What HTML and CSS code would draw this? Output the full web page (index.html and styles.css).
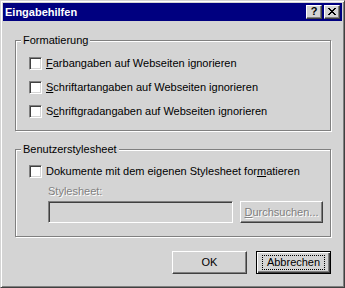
FILE: index.html
```html
<!DOCTYPE html>
<html lang="de">
<head>
<meta charset="utf-8">
<title>Eingabehilfen</title>
<link rel="stylesheet" href="styles.css">
</head>
<body>
<div class="window">
  <div class="titlebar">
    <span class="title">Eingabehilfen</span>
    <div class="caption-buttons">
      <span class="cap-btn help">?</span>
      <span class="cap-btn close">
        <svg width="8" height="7" viewBox="0 0 8 7" shape-rendering="crispEdges">
          <path d="M0 0h2v1h-2zM6 0h2v1h-2zM1 1h2v1h-2zM5 1h2v1h-2zM2 2h4v1h-4zM3 3h2v1h-2zM2 4h4v1h-4zM1 5h2v1h-2zM5 5h2v1h-2zM0 6h2v1h-2zM6 6h2v1h-2z" fill="#000"/>
        </svg>
      </span>
    </div>
  </div>
  <div class="client">
    <div class="group group-format">
      <span class="legend">Formatierung</span>
      <div class="check-row"><span class="checkbox"></span><span class="label"><u>F</u>arbangaben auf Webseiten ignorieren</span></div>
      <div class="check-row"><span class="checkbox"></span><span class="label"><u>S</u>chriftartangaben auf Webseiten ignorieren</span></div>
      <div class="check-row"><span class="checkbox"></span><span class="label">S<u>c</u>hriftgradangaben auf Webseiten ignorieren</span></div>
    </div>
    <div class="group group-user">
      <span class="legend">Benutzerstylesheet</span>
      <div class="check-row"><span class="checkbox"></span><span class="label">Dokumente mit dem eigenen Stylesheet for<u>m</u>atieren</span></div>
      <div class="field-label disabled">Stylesheet:</div>
      <div class="field-row">
        <span class="textbox"></span>
        <span class="button browse disabled"><span><u>D</u>urchsuchen...</span></span>
      </div>
    </div>
    <div class="dialog-buttons">
      <span class="button push">OK</span>
      <span class="button push default"><span class="focus">Abbrechen</span></span>
    </div>
  </div>
</div>
</body>
</html>
```

FILE: styles.css
```css
html, body {
  margin: 0;
  padding: 0;
  background: #d4d4d4;
}

body {
  font-family: "Liberation Sans", Arial, sans-serif;
  font-size: 11px;
  color: #000;
}

.window {
  box-sizing: border-box;
  width: 345px;
  height: 288px;
  background: #d4d4d4;
  border: 1px solid;
  border-color: #d4d4d4 #404040 #404040 #d4d4d4;
  box-shadow: inset 1px 1px #fff, inset -1px -1px #808080;
  padding: 2px;
  display: flex;
  flex-direction: column;
}

.titlebar {
  height: 18px;
  background: #000080;
  color: #fff;
  display: flex;
  align-items: center;
  justify-content: space-between;
  padding: 0 2px 0 2px;
}

.title {
  font-weight: bold;
  font-size: 11px;
  line-height: 13px;
}

.caption-buttons {
  display: flex;
  gap: 2px;
}

.cap-btn {
  box-sizing: border-box;
  width: 16px;
  height: 14px;
  background: #d4d4d4;
  border: 1px solid;
  border-color: #fff #404040 #404040 #fff;
  box-shadow: inset -1px -1px #808080;
  display: flex;
  align-items: center;
  justify-content: center;
  color: #000;
}

.cap-btn.help {
  font-weight: bold;
  font-size: 11px;
  line-height: 11px;
  padding-bottom: 1px;
}

.cap-btn.close svg {
  display: block;
  margin-top: -1px;
}

.client {
  flex: 1;
  display: flex;
  flex-direction: column;
  padding: 19px 11px 0 12px;
}

.group {
  position: relative;
  border: 1px solid #808080;
  box-shadow: inset 1px 1px #fff, 1px 1px #fff;
  display: flex;
  flex-direction: column;
}

.legend {
  position: absolute;
  top: -7px;
  left: 5px;
  padding: 0 2px;
  background: #d4d4d4;
  line-height: 13px;
}

.group-format {
  height: 91px;
  box-sizing: border-box;
  padding: 16px 0 0 13px;
  gap: 11px;
}

.group-user {
  height: 88px;
  box-sizing: border-box;
  padding: 15px 0 0 13px;
  margin-top: 18px;
}

.check-row {
  display: flex;
  align-items: center;
  height: 13px;
  gap: 4px;
}

.checkbox {
  box-sizing: border-box;
  width: 13px;
  height: 13px;
  background: #fff;
  border: 1px solid;
  border-color: #808080 #fff #fff #808080;
  box-shadow: inset 1px 1px #404040, inset -1px -1px #d4d4d4;
  flex: none;
}

.label {
  line-height: 13px;
  white-space: nowrap;
}

u {
  text-decoration: underline;
  text-underline-offset: 1px;
}

.disabled {
  color: #808080;
  text-shadow: 1px 1px 0 #fff;
}

.field-label {
  margin-top: 7px;
  margin-left: 19px;
  line-height: 13px;
}

.field-row {
  display: flex;
  margin-top: 3px;
  margin-left: 19px;
  gap: 7px;
  height: 22px;
}

.textbox {
  box-sizing: border-box;
  width: 185px;
  height: 22px;
  background: #d4d4d4;
  border: 1px solid;
  border-color: #808080 #fff #fff #808080;
  box-shadow: inset 1px 1px #404040, inset -1px -1px #d4d4d4;
}

.button {
  box-sizing: border-box;
  background: #d4d4d4;
  border: 1px solid;
  border-color: #fff #404040 #404040 #fff;
  box-shadow: inset -1px -1px #808080;
  display: flex;
  align-items: center;
  justify-content: center;
  line-height: 13px;
  white-space: nowrap;
}

.browse {
  width: 83px;
  height: 22px;
}

.dialog-buttons {
  display: flex;
  justify-content: flex-end;
  gap: 9px;
  margin-top: 14px;
  padding-right: 0;
}

.push {
  width: 75px;
  height: 23px;
}

.push.default {
  border: 1px solid #000;
  box-shadow: inset 1px 1px #fff, inset -1px -1px #404040, inset -2px -2px #808080;
}

.focus {
  box-sizing: border-box;
  width: 63px;
  height: 15px;
  border: 1px dotted #000;
  display: flex;
  align-items: center;
  justify-content: center;
}
```
